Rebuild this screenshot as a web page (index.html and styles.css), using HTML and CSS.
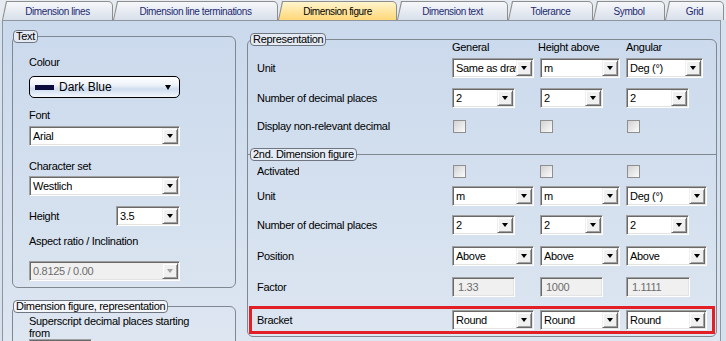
FILE: index.html
```html
<!DOCTYPE html>
<html lang="en">
<head>
  <meta charset="UTF-8">
  <title>Dimension figure</title>
  <link rel="stylesheet" href="styles.css">
</head>
<body>

<div class="tabs">
  <div class="tab t1"><span>Dimension lines</span></div>
  <div class="tab t2"><span>Dimension line terminations</span></div>
  <div class="tab t3 on"><span>Dimension figure</span></div>
  <div class="tab t4"><span>Dimension text</span></div>
  <div class="tab t5"><span>Tolerance</span></div>
  <div class="tab t6"><span>Symbol</span></div>
  <div class="tab t7"><span>Grid</span></div>
</div>

<div class="page">

  <div class="left">
    <fieldset class="group">
      <legend>Text</legend>
      <div class="gbody">
        <div class="lbl" style="margin-top:13px">Colour</div>
        <div class="colour">
          <span class="swatch"></span>
          <span class="cname">Dark Blue</span>
          <span class="tri"></span>
        </div>

        <div class="lbl" style="margin-top:11px">Font</div>
        <div class="combo w151" style="margin-top:4px"><span class="val">Arial</span><span class="btn"></span></div>

        <div class="lbl" style="margin-top:14px">Character set</div>
        <div class="combo w151" style="margin-top:3px"><span class="val">Westlich</span><span class="btn"></span></div>

        <div class="hrow">
          <div class="lbl hlbl">Height</div>
          <div class="combo w64"><span class="val">3.5</span><span class="btn"></span></div>
        </div>

        <div class="lbl" style="margin-top:9px">Aspect ratio / Inclination</div>
        <div class="combo w151 off" style="margin-top:13px"><span class="val">0.8125 / 0.00</span><span class="btn"></span></div>
      </div>
    </fieldset>

    <fieldset class="group second-left">
      <legend>Dimension figure, representation</legend>
      <div class="gbody2">
        <div class="wrap-lbl">Superscript decimal places starting from</div>
        <div class="combo w63"><span class="val">2</span><span class="btn"></span></div>
      </div>
    </fieldset>
  </div>

  <div class="right">
    <fieldset class="group rep">
      <legend>Representation</legend>

      <div class="row hdr">
        <span></span>
        <span>General</span>
        <span class="pull">Height above</span>
        <span>Angular</span>
      </div>

      <div class="row" style="margin-top:4px">
        <span>Unit</span>
        <div class="combo w82"><span class="val">Same as drawing</span><span class="btn"></span></div>
        <div class="combo w80"><span class="val">m</span><span class="btn"></span></div>
        <div class="combo w77"><span class="val">Deg (°)</span><span class="btn"></span></div>
      </div>

      <div class="row" style="margin-top:10px">
        <span>Number of decimal places</span>
        <div class="combo w63"><span class="val">2</span><span class="btn"></span></div>
        <div class="combo w63"><span class="val">2</span><span class="btn"></span></div>
        <div class="combo w63"><span class="val">2</span><span class="btn"></span></div>
      </div>

      <div class="row" style="margin-top:8px">
        <span>Display non-relevant decimal</span>
        <span class="check c1"></span>
        <span class="check"></span>
        <span class="check c1"></span>
      </div>

      <fieldset class="second">
        <legend>2nd. Dimension figure</legend>

        <div class="row">
          <span class="clip">Activated</span>
          <span class="check c1"></span>
          <span class="check"></span>
          <span class="check c1"></span>
        </div>

        <div class="row" style="margin-top:5px">
          <span>Unit</span>
          <div class="combo w82"><span class="val">m</span><span class="btn"></span></div>
          <div class="combo w80"><span class="val">m</span><span class="btn"></span></div>
          <div class="combo w81"><span class="val">Deg (°)</span><span class="btn"></span></div>
        </div>

        <div class="row" style="margin-top:9px">
          <span>Number of decimal places</span>
          <div class="combo w63"><span class="val">2</span><span class="btn"></span></div>
          <div class="combo w63"><span class="val">2</span><span class="btn"></span></div>
          <div class="combo w63"><span class="val">2</span><span class="btn"></span></div>
        </div>

        <div class="row" style="margin-top:11px">
          <span>Position</span>
          <div class="combo w82"><span class="val">Above</span><span class="btn"></span></div>
          <div class="combo w80"><span class="val">Above</span><span class="btn"></span></div>
          <div class="combo w81"><span class="val">Above</span><span class="btn"></span></div>
        </div>

        <div class="row" style="margin-top:11px">
          <span>Factor</span>
          <div class="field w63">1.33</div>
          <div class="field w63">1000</div>
          <div class="field w64">1.1111</div>
        </div>

        <div class="bracket">
          <div class="row">
            <span>Bracket</span>
            <div class="combo w82"><span class="val">Round</span><span class="btn"></span></div>
            <div class="combo w80"><span class="val">Round</span><span class="btn"></span></div>
            <div class="combo w81"><span class="val">Round</span><span class="btn"></span></div>
          </div>
        </div>
      </fieldset>
    </fieldset>
  </div>

</div>

</body>
</html>
```

FILE: styles.css
```css
body {
  margin: 0;
  width: 726px;
  height: 341px;
  overflow: hidden;
  background: #d6e1ee;
  font-family: 'Liberation Sans', Arial, sans-serif;
  font-size: 11px;
  letter-spacing: -0.3px;
  color: #000;
}

/* tab strip */

.tabs {
  display: flex;
  height: 20px;
  padding-left: 2px;
  background: #e6ebf2;
}

.tab {
  flex: none;
  box-sizing: border-box;
  height: 19px;
  margin-top: 1px;
  padding: 1px 1px 0 1px;
  background: #8e8e8e;
  border-top-right-radius: 5px;
  clip-path: polygon(4px 0, 100% 0, 100% 100%, 0 100%);
}

.tab span {
  display: flex;
  align-items: center;
  justify-content: center;
  height: 100%;
  background: linear-gradient(#f5f7fa, #d9e0eb);
  border-top-right-radius: 4px;
  clip-path: polygon(4px 0, 100% 0, 100% 100%, 0 100%);
  color: #1d2a70;
  font-size: 10px;
  letter-spacing: -0.4px;
  white-space: nowrap;
}

.tab.on span {
  background: linear-gradient(#fff5cc, #ffd778);
  color: #000;
}

.t1 { width: 111px; }
.t2 { width: 165px; }
.t3 { width: 119px; }
.t4 { width: 111px; }
.t5 { width: 85px; }
.t6 { width: 72px; }
.t7 { width: 59px; }

/* page frame */

.page {
  display: flex;
  gap: 11px;
  box-sizing: border-box;
  width: 719px;
  height: 321px;
  margin-left: 2px;
  padding: 9px 0 0 9px;
  border: 1px solid #8e959e;
  border-bottom: none;
  background: linear-gradient(#cad9ec, #dde6f1);
  overflow: hidden;
}

.left {
  flex: none;
  width: 224px;
}

.right {
  flex: none;
  width: 470px;
  margin-top: 3px;
}

/* group boxes */

.group {
  margin: 0;
  padding: 0;
  min-width: 0;
  border: 1px solid #7f8791;
  border-radius: 6px;
}

.group legend,
.second legend {
  margin-left: 0;
  padding: 0 2px;
  border: 1px solid #6f7680;
  border-radius: 4px;
  line-height: 11px;
  background: #e4ebf4;
}

.gbody {
  padding: 0 16px 6px 16px;
}

.second-left {
  margin-top: 12px;
}

.second-left legend {
  background: #f3f6fa;
}

.gbody2 {
  padding: 2px 16px 0 16px;
}

.lbl {
  height: 13px;
  line-height: 13px;
  white-space: nowrap;
}

.wrap-lbl {
  width: 168px;
  line-height: 12px;
}

.hrow {
  display: flex;
  align-items: center;
  margin-top: 10px;
}

.hlbl {
  width: 87px;
}

/* colour picker */

.colour {
  display: flex;
  align-items: center;
  box-sizing: border-box;
  width: 151px;
  height: 22px;
  margin-top: 7px;
  padding: 0 8px 0 5px;
  border: 1px solid #000;
  border-radius: 5px;
  background: linear-gradient(#ffffff 0%, #eef3f9 40%, #cfddef 60%, #f2f6fb 100%);
}

.swatch {
  width: 19px;
  height: 5px;
  background: #0b0b3c;
}

.cname {
  margin-left: 5px;
  font-size: 12px;
  letter-spacing: 0;
}

.tri {
  margin-left: auto;
  border-left: 3px solid transparent;
  border-right: 3px solid transparent;
  border-top: 5px solid #000;
}

/* combo boxes and fields */

.combo,
.field {
  display: flex;
  align-items: center;
  box-sizing: border-box;
  height: 20px;
  padding: 1px;
  border: 1px solid;
  border-color: #a0a0a0 #ffffff #ffffff #a0a0a0;
  box-shadow: inset 1px 1px #696969, inset -1px -1px #e3e3e3;
  background: #fff;
}

.combo .val {
  flex: 1;
  min-width: 0;
  padding-left: 2px;
  overflow: hidden;
  white-space: nowrap;
}

.combo .btn {
  display: flex;
  align-items: center;
  justify-content: center;
  flex: none;
  box-sizing: border-box;
  width: 16px;
  height: 16px;
  border: 1px solid;
  border-color: #f0f0f0 #696969 #696969 #f0f0f0;
  box-shadow: inset 1px 1px #fff, inset -1px -1px #a0a0a0;
  background: #f0f0f0;
}

.combo .btn::after {
  content: '';
  border-left: 3.5px solid transparent;
  border-right: 3.5px solid transparent;
  border-top: 4px solid #000;
}

.combo.off {
  background: #f0f0f0;
  color: #6d6d6d;
}

.combo.off .btn::after {
  border-top-color: #a0a0a0;
}

.field {
  padding-left: 5px;
  background: #f0f0f0;
  color: #6d6d6d;
}

.w151 { width: 151px; }
.w82 { width: 82px; }
.w81 { width: 81px; }
.w80 { width: 80px; }
.w77 { width: 77px; }
.w64 { width: 64px; }
.w63 { width: 63px; }

.check {
  box-sizing: border-box;
  width: 13px;
  height: 13px;
  border: 1px solid #8f8f8f;
  background: linear-gradient(135deg, #d2d2d2, #fbfbfb);
}

.check.c1 {
  margin-left: 1px;
}

/* right side rows */

.rep legend {
  margin-left: 2px;
}

.row {
  display: grid;
  grid-template-columns: 195px 88px 86px 1fr;
  align-items: center;
  height: 20px;
  padding-left: 9px;
  white-space: nowrap;
}

.hdr {
  height: 13px;
  margin-top: -5px;
  line-height: 13px;
}

.pull {
  margin-left: -2px;
}

.clip {
  width: 42px;
  overflow: hidden;
}

.second {
  margin: 12px 0 0 0;
  padding: 0 0 2px 0;
  min-width: 0;
  border: none;
  border-top: 1px solid #7f8791;
}

.second legend {
  margin-left: 2px;
}

.bracket {
  margin: 9px 1px 0 1px;
  padding: 1px 0;
  border: 3px solid #e31e24;
}

.bracket .row {
  padding-left: 5px;
}
```
